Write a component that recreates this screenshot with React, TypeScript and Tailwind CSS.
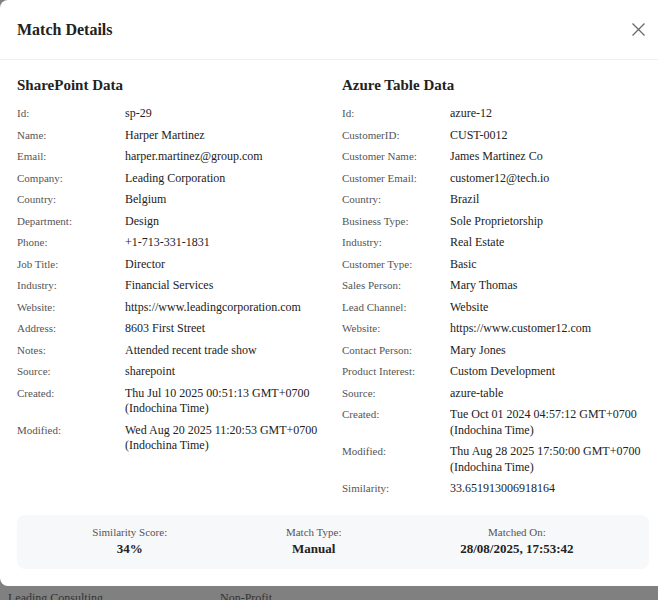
import React from 'react';

type Row = { label: string; value: string };

const sharePointRows: Row[] = [
  { label: 'Id:', value: 'sp-29' },
  { label: 'Name:', value: 'Harper Martinez' },
  { label: 'Email:', value: 'harper.martinez@group.com' },
  { label: 'Company:', value: 'Leading Corporation' },
  { label: 'Country:', value: 'Belgium' },
  { label: 'Department:', value: 'Design' },
  { label: 'Phone:', value: '+1-713-331-1831' },
  { label: 'Job Title:', value: 'Director' },
  { label: 'Industry:', value: 'Financial Services' },
  { label: 'Website:', value: 'https://www.leadingcorporation.com' },
  { label: 'Address:', value: '8603 First Street' },
  { label: 'Notes:', value: 'Attended recent trade show' },
  { label: 'Source:', value: 'sharepoint' },
  { label: 'Created:', value: 'Thu Jul 10 2025 00:51:13 GMT+0700 (Indochina Time)' },
  { label: 'Modified:', value: 'Wed Aug 20 2025 11:20:53 GMT+0700 (Indochina Time)' },
];

const azureRows: Row[] = [
  { label: 'Id:', value: 'azure-12' },
  { label: 'CustomerID:', value: 'CUST-0012' },
  { label: 'Customer Name:', value: 'James Martinez Co' },
  { label: 'Customer Email:', value: 'customer12@tech.io' },
  { label: 'Country:', value: 'Brazil' },
  { label: 'Business Type:', value: 'Sole Proprietorship' },
  { label: 'Industry:', value: 'Real Estate' },
  { label: 'Customer Type:', value: 'Basic' },
  { label: 'Sales Person:', value: 'Mary Thomas' },
  { label: 'Lead Channel:', value: 'Website' },
  { label: 'Website:', value: 'https://www.customer12.com' },
  { label: 'Contact Person:', value: 'Mary Jones' },
  { label: 'Product Interest:', value: 'Custom Development' },
  { label: 'Source:', value: 'azure-table' },
  { label: 'Created:', value: 'Tue Oct 01 2024 04:57:12 GMT+0700 (Indochina Time)' },
  { label: 'Modified:', value: 'Thu Aug 28 2025 17:50:00 GMT+0700 (Indochina Time)' },
  { label: 'Similarity:', value: '33.651913006918164' },
];

const summary = [
  { label: 'Similarity Score:', value: '34%' },
  { label: 'Match Type:', value: 'Manual' },
  { label: 'Matched On:', value: '28/08/2025, 17:53:42' },
];

const DataColumn: React.FC<{ title: string; rows: Row[] }> = ({ title, rows }) => (
  <div>
    <h3 className="text-[15px] font-bold text-[#222] leading-[18px] mb-[12px]">{title}</h3>
    <div className="flex flex-col gap-[6px]">
      {rows.map((row) => (
        <div key={row.label} className="flex items-start">
          <span className="w-[108px] shrink-0 text-[11px] leading-[15.5px] text-[#555]">{row.label}</span>
          <span className="text-[12px] leading-[15.5px] text-[#222]">{row.value}</span>
        </div>
      ))}
    </div>
  </div>
);

export default function App() {
  return (
    <div className="relative h-[600px] w-full overflow-hidden bg-[#808080] font-['Liberation_Serif']">
      {/* page behind the overlay */}
      <div className="absolute left-0 top-[589px] flex text-[12px] text-[#333]">
        <span className="w-[220px] pl-[8px]">Leading Consulting</span>
        <span>Non-Profit</span>
      </div>

      {/* modal */}
      <div className="absolute left-0 top-0 w-[666px] h-[586px] bg-white rounded-lg flex flex-col">
        <div className="flex items-center justify-between h-[60px] pl-[17px] pr-[21px] border-b border-[#eeeeee]">
          <h2 className="text-[16px] font-bold text-[#222]">Match Details</h2>
          <button className="text-[#666]">
            <svg width="13" height="13" viewBox="0 0 13 13" fill="none" stroke="currentColor" strokeWidth="1.2">
              <path d="M0.5 0.5L12.5 12.5M12.5 0.5L0.5 12.5" />
            </svg>
          </button>
        </div>

        <div className="px-[17px] pt-[16px] flex flex-col flex-1">
          <div className="grid grid-cols-2 gap-x-[18px]">
            <DataColumn title="SharePoint Data" rows={sharePointRows} />
            <DataColumn title="Azure Table Data" rows={azureRows} />
          </div>

          <div className="mt-auto mb-[17px] flex justify-around rounded-lg bg-[#f7f8fa] px-4 pt-[10px] pb-[11px] text-center">
            {summary.map((s) => (
              <div key={s.label} className="flex flex-col">
                <span className="text-[11px] leading-[15px] text-[#555]">{s.label}</span>
                <span className="text-[13px] font-bold leading-[18px] text-[#222]">{s.value}</span>
              </div>
            ))}
          </div>
        </div>
      </div>
    </div>
  );
}
